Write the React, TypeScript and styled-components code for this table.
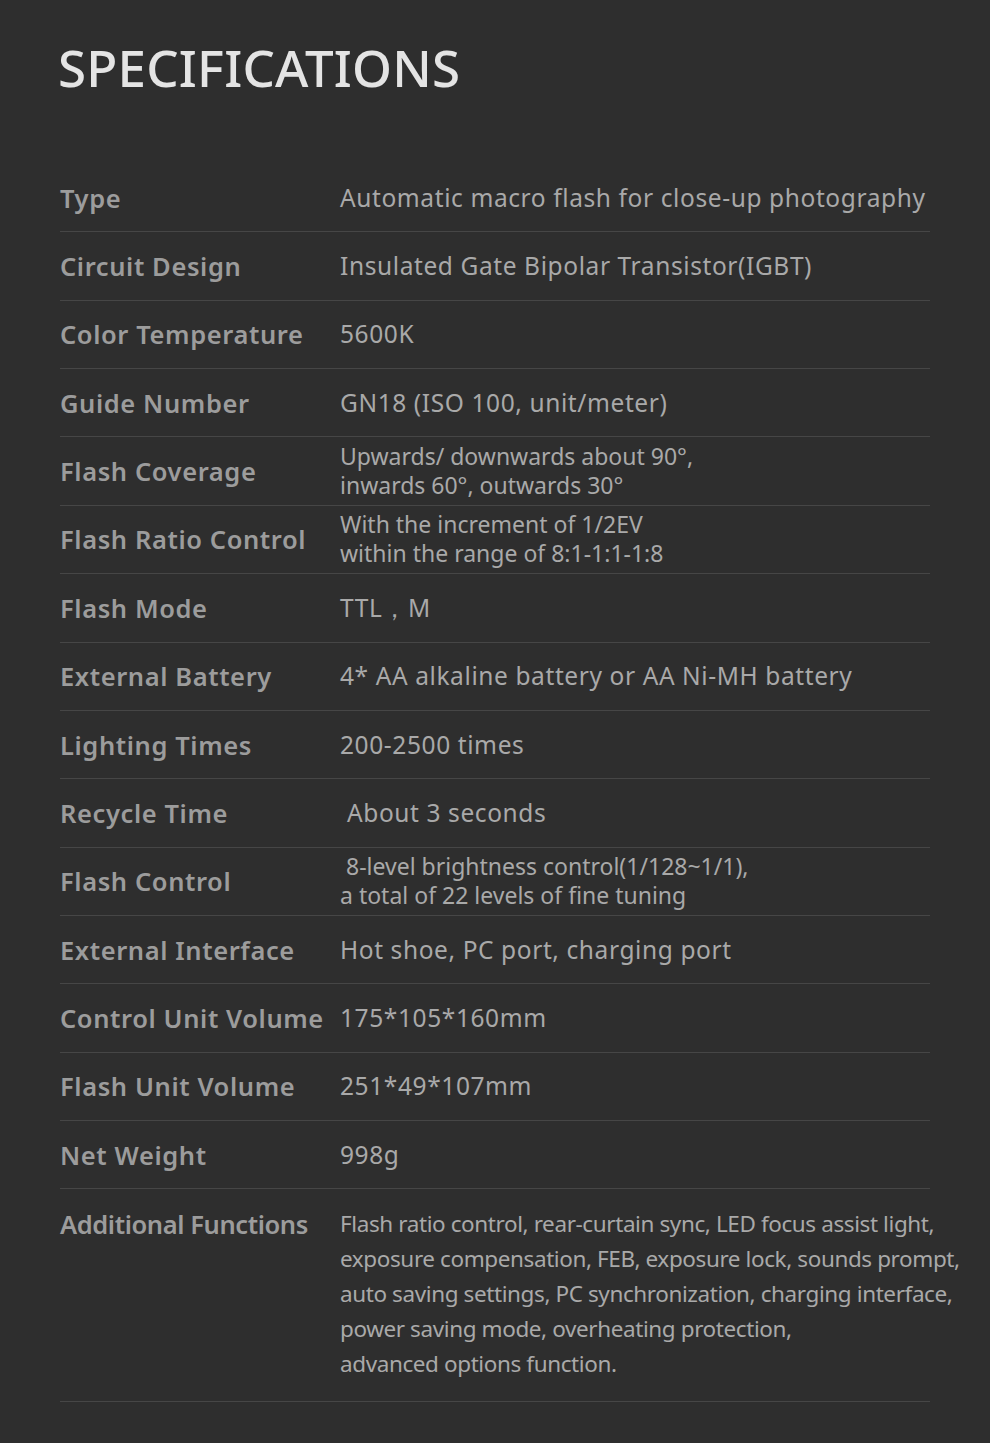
import React from 'react';
import styled, { createGlobalStyle } from 'styled-components';

interface ISpec {
  label: string;
  value: string[];
  size?: 'normal' | 'small' | 'list';
}

const specs: ISpec[] = [
  { label: 'Type', value: ['Automatic macro flash for close-up photography'] },
  { label: 'Circuit Design', value: ['Insulated Gate Bipolar Transistor(IGBT)'] },
  { label: 'Color Temperature', value: ['5600K'] },
  { label: 'Guide Number', value: ['GN18 (ISO 100, unit/meter)'] },
  {
    label: 'Flash Coverage',
    value: ['Upwards/ downwards about 90°,', 'inwards 60°, outwards 30°'],
    size: 'small',
  },
  {
    label: 'Flash Ratio Control',
    value: ['With the increment of 1/2EV', 'within the range of 8:1-1:1-1:8'],
    size: 'small',
  },
  { label: 'Flash Mode', value: ['TTL，M'] },
  { label: 'External Battery', value: ['4* AA alkaline battery or AA Ni-MH battery'] },
  { label: 'Lighting Times', value: ['200-2500 times'] },
  { label: 'Recycle Time', value: [' About 3 seconds'] },
  {
    label: 'Flash Control',
    value: [' 8-level brightness control(1/128~1/1),', 'a total of 22 levels of fine tuning'],
    size: 'small',
  },
  { label: 'External Interface', value: ['Hot shoe, PC port, charging port'] },
  { label: 'Control Unit Volume', value: ['175*105*160mm'] },
  { label: 'Flash Unit Volume', value: ['251*49*107mm'] },
  { label: 'Net Weight', value: ['998g'] },
  {
    label: 'Additional Functions',
    value: [
      'Flash ratio control, rear-curtain sync, LED focus assist light,',
      'exposure compensation, FEB, exposure lock, sounds prompt,',
      'auto saving settings, PC synchronization, charging interface,',
      'power saving mode, overheating protection,',
      'advanced options function.',
    ],
    size: 'list',
  },
];

const GlobalStyle = createGlobalStyle`
  html, body {
    margin: 0;
    padding: 0;
    background: #2e2e2e;
  }
  body {
    font-family: "Noto Sans", "Open Sans", sans-serif;
  }
`;

const Page = styled.div`
  width: 990px;
  min-height: 1443px;
  box-sizing: border-box;
  background: #2e2e2e;
  padding: 35px 60px 0 60px;
`;

const Title = styled.h1`
  margin: 0 0 0 -2px;
  font-size: 51px;
  font-weight: 500;
  letter-spacing: 0.2px;
  color: #e4e4e4;
  line-height: 64px;
`;

const Table = styled.div`
  margin-top: 65px;
  width: 870px;
`;

const Row = styled.div<{ $tall?: boolean }>`
  display: grid;
  grid-template-columns: 280px 1fr;
  align-items: ${(p) => (p.$tall ? 'start' : 'center')};
  height: ${(p) => (p.$tall ? 'auto' : '68.36px')};
  box-sizing: border-box;
  border-bottom: 1px solid #464646;
  padding: ${(p) => (p.$tall ? '17px 0 20px' : '0')};
`;

const Label = styled.div<{ $narrow?: boolean }>`
  font-size: 25.5px;
  font-weight: 600;
  line-height: 36px;
  color: #9c9c9c;
  letter-spacing: ${(p) => (p.$narrow ? '-0.4px' : '0.6px')};
  white-space: nowrap;
`;

const Value = styled.div<{ $size: string }>`
  color: #a9a9a9;
  white-space: pre;
  font-weight: 400;
  font-size: ${(p) => (p.$size === 'normal' ? '24.5px' : p.$size === 'list' ? '22.5px' : '23px')};
  line-height: ${(p) => (p.$size === 'list' ? '35px' : p.$size === 'normal' ? '34px' : '29px')};
  letter-spacing: ${(p) => (p.$size === 'normal' ? '0.6px' : p.$size === 'list' ? '-0.4px' : '0')};
  margin-right: -40px;
`;

export default function App() {
  return (
    <Page>
      <GlobalStyle />
      <Title>SPECIFICATIONS</Title>
      <Table>
        {specs.map((spec) => {
          const size = spec.size || 'normal';
          return (
            <Row key={spec.label} $tall={size === 'list'}>
              <Label $narrow={size === 'list'}>{spec.label}</Label>
              <Value $size={size}>
                {spec.value.map((line, idx) => (
                  <div key={`${spec.label}-${idx}`}>{line}</div>
                ))}
              </Value>
            </Row>
          );
        })}
      </Table>
    </Page>
  );
}
